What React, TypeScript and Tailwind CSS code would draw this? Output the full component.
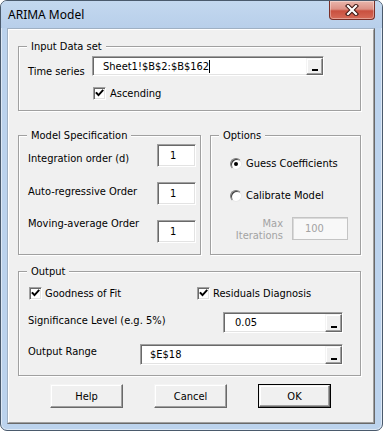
import React from "react";

const F0 = "font-[family-name:DejaVu_Sans_Condensed,Liberation_Sans,sans-serif] text-[11px] leading-[13px]";
const F = F0 + " text-black";
const SUNKEN =
  "border border-t-[#a0a0a0] border-l-[#a0a0a0] border-r-white border-b-white shadow-[inset_1px_1px_0_#696969,inset_-1px_-1px_0_#e3e3e3]";
const RAISED =
  "border border-t-[#f4f4f4] border-l-[#f4f4f4] border-r-[#696969] border-b-[#696969] shadow-[inset_-1px_-1px_0_#a0a0a0,inset_1px_1px_0_#ffffff] bg-[#f0f0f0]";

function Group({ label, className, children }: { label: string; className: string; children?: React.ReactNode }) {
  return (
    <div className={"relative border border-[#a0a0a0] shadow-[inset_1px_1px_0_#ffffff,1px_1px_0_#ffffff] " + className}>
      <span className={"absolute left-[8px] -top-[7px] px-[4px] bg-[#f0f0f0] " + F}>{label}</span>
      {children}
    </div>
  );
}

function DropBtn() {
  return (
    <div className={"w-[17px] self-stretch flex items-end justify-center pb-[3px] " + RAISED}>
      <div className="w-[6px] h-[2px] bg-black" />
    </div>
  );
}

function Check() {
  return (
    <div className={"w-[13px] h-[13px] bg-white flex items-center justify-center shrink-0 " + SUNKEN}>
      <svg width="9" height="9" viewBox="0 0 9 9">
        <path d="M1.5 4 L3.5 6.2 L7.6 1.6" stroke="#000" strokeWidth="1.9" fill="none" strokeLinecap="square" />
      </svg>
    </div>
  );
}

function Radio({ on }: { on?: boolean }) {
  return (
    <div className="w-[12px] h-[12px] rounded-full bg-white border border-t-[#7a7a7a] border-l-[#7a7a7a] border-r-[#e8e8e8] border-b-[#e8e8e8] shadow-[inset_1px_1px_0_#404040] flex items-center justify-center shrink-0">
      {on && <div className="w-[4px] h-[4px] rounded-full bg-black" />}
    </div>
  );
}

function NumBox({ v }: { v: string }) {
  return (
    <div className={"w-[39px] h-[23px] bg-white flex items-center pl-[12px] " + SUNKEN + " " + F}>{v}</div>
  );
}

function Btn({ label, def }: { label: string; def?: boolean }) {
  const inner = (
    <div className={"w-full h-full flex items-center justify-center " + RAISED + " " + F}>{label}</div>
  );
  return def ? (
    <div className="w-[73px] h-[24px] border border-black">{inner}</div>
  ) : (
    <div className="w-[73px] h-[24px]">{inner}</div>
  );
}

export default function App() {
  return (
    <div className="w-[383px] h-[431px] bg-white">
      <div className="w-[383px] h-[431px] rounded-[7px] border border-[#4a5a6c] bg-[#bcd3ed] flex flex-col overflow-hidden shadow-[inset_0_0_0_1px_rgba(255,255,255,0.5)]">
        {/* title bar */}
        <div className="h-[27px] flex items-start bg-[linear-gradient(to_bottom,#c3d8ef,#b8cfea)]">
          <span className="ml-[7px] mt-[6px] text-[12px] leading-[16px] font-[family-name:Noto_Sans,Liberation_Sans,sans-serif] text-black">
            ARIMA Model
          </span>
          <div className="ml-auto mr-[7px] w-[46px] h-[19px] rounded-b-[4px] border border-t-0 border-[#7a2f27] bg-[linear-gradient(to_bottom,#e9b6ac_0%,#dc9185_45%,#c9503f_55%,#d66b58_100%)] shadow-[inset_0_0_0_1px_rgba(255,255,255,0.35)] flex items-center justify-center">
            <svg width="14" height="12" viewBox="0 0 14 12">
              <path d="M3 2 L11 10 M11 2 L3 10" stroke="#3b1410" strokeWidth="4.2" strokeLinecap="square" />
              <path d="M3 2 L11 10 M11 2 L3 10" stroke="#ffffff" strokeWidth="2.2" strokeLinecap="square" />
            </svg>
          </div>
        </div>
        {/* client */}
        <div className="ml-[6px] mr-[7px] h-[396px] border border-t-[#9fb0c3] border-l-[#9fb0c3] border-r-[#696969] border-b-[#696969]">
          <div className="h-full border border-t-white border-l-white border-r-[#a0a0a0] border-b-[#a0a0a0] bg-[#f0f0f0] flex flex-col pl-[9px] pt-[16px]">
            {/* Input Data set */}
            <Group label="Input Data set" className="w-[343px] h-[65px] shrink-0">
              <div className="flex items-start mt-[9px] pl-[9px]">
                <span className={"w-[64px] mt-[9px] " + F}>Time series</span>
                <div className={"w-[232px] h-[20px] bg-white flex items-center pl-[10px] " + SUNKEN + " " + F}>
                  <span>Sheet1!$B$2:$B$162</span>
                  <span className="w-[1px] h-[13px] bg-black" />
                  <div className="ml-auto self-stretch flex mt-[1px]">
                    <DropBtn />
                  </div>
                </div>
              </div>
              <div className="flex items-center mt-[9px] pl-[74px] gap-[4px]">
                <Check />
                <span className={F}>Ascending</span>
              </div>
            </Group>

            <div className="flex gap-[9px] mt-[24px] shrink-0">
              <Group label="Model Specification" className="w-[183px] h-[120px] flex">
                <div className="flex flex-col pl-[9px]">
                  <span className={"mt-[16px] " + F}>Integration order (d)</span>
                  <span className={"mt-[20px] " + F}>Auto-regressive Order</span>
                  <span className={"mt-[19px] " + F}>Moving-average Order</span>
                </div>
                <div className="ml-auto pr-[4px] pt-[8px] flex flex-col gap-[15px]">
                  <NumBox v="1" />
                  <NumBox v="1" />
                  <NumBox v="1" />
                </div>
              </Group>
              <Group label="Options" className="w-[151px] h-[120px]">
                <div className="flex flex-col pl-[19px]">
                  <div className="flex items-center gap-[4px] mt-[21px] h-[13px]">
                    <Radio on />
                    <span className={F}>Guess Coefficients</span>
                  </div>
                  <div className="flex items-center gap-[4px] mt-[19px] h-[13px]">
                    <Radio />
                    <span className={F}>Calibrate Model</span>
                  </div>
                  <div className="flex items-start mt-[15px]">
                    <span className={"w-[53px] text-right !leading-[12px] pt-[1px] text-[#a3a3a3] " + F0}>
                      Max
                      <br />
                      Iterations
                    </span>
                    <div className={"ml-[9px] w-[56px] h-[23px] bg-[#f8f8f8] flex items-center pl-[12px] border border-[#c4c4c4] shadow-[inset_1px_1px_0_#dadada] text-[#a3a3a3] " + F0}>
                      100
                    </div>
                  </div>
                </div>
              </Group>
            </div>

            {/* Output */}
            <Group label="Output" className="w-[343px] h-[105px] mt-[16px] shrink-0">
              <div className="flex items-center mt-[15px] pl-[10px]">
                <div className="w-[168px] flex items-center gap-[3px]">
                  <Check />
                  <span className={F}>Goodness of Fit</span>
                </div>
                <div className="flex items-center gap-[3px]">
                  <Check />
                  <span className={F}>Residuals Diagnosis</span>
                </div>
              </div>
              <div className="flex items-start mt-[12px] pl-[9px]">
                <span className={"w-[195px] mt-[2px] " + F}>Significance Level (e.g. 5%)</span>
                <div className={"w-[120px] h-[21px] bg-white flex items-center pl-[11px] " + SUNKEN + " " + F}>
                  <span>0.05</span>
                  <div className="ml-auto self-stretch flex mt-[1px]">
                    <DropBtn />
                  </div>
                </div>
              </div>
              <div className="flex items-start mt-[11px] pl-[9px]">
                <span className={"w-[112px] mt-[1px] " + F}>Output Range</span>
                <div className={"w-[203px] h-[21px] bg-white flex items-center pl-[9px] " + SUNKEN + " " + F}>
                  <span>$E$18</span>
                  <div className="ml-auto self-stretch flex mt-[1px]">
                    <DropBtn />
                  </div>
                </div>
              </div>
            </Group>

            {/* buttons */}
            <div className="flex gap-[31px] mt-[8px] ml-[32px]">
              <Btn label="Help" />
              <Btn label="Cancel" />
              <Btn label="OK" def />
            </div>
          </div>
        </div>
      </div>
    </div>
  );
}
